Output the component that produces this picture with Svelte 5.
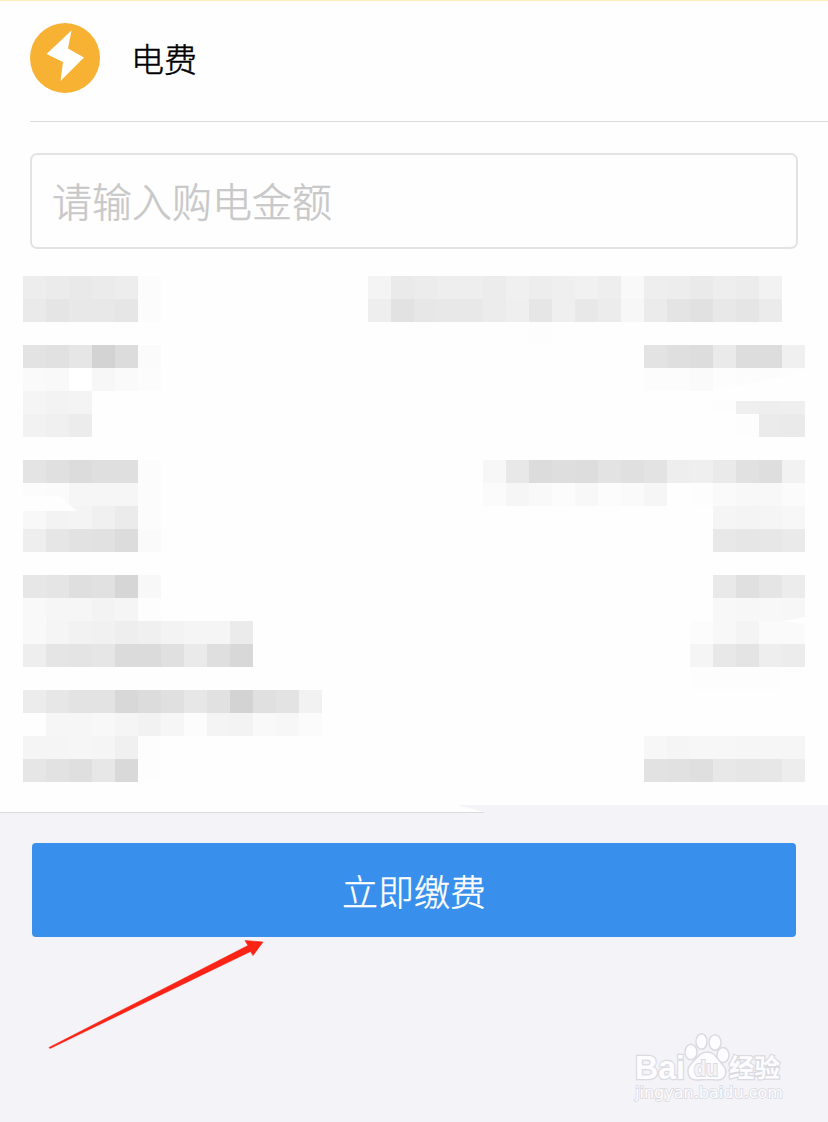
<script>
    let amount = "";

    // One entry per 23px row, two hex digits of grey per block
    const rows = [
        { left: "edebe9ebedfc", right: "f4eaeceeeeecf0edeff1eef9eeedeaeeecf2fe" },
        { left: "eae5e8e8e6fc", right: "eee2e7e8e8ecefe6efe8ecf7ebe4e1e8e5ebfe" },
        { left: "fefefefefefe", right: "fdfefefefefefefefefefefe" },
        { left: "e3e1e6d3dcfb", right: "fee3dfddeaddddf0" },
        { left: "faf9fff7fafc", right: "fcfcfafdfcfcfd" },
        { left: "f5f3f4", right: "fdefeeef" },
        { left: "f2f0ec", right: "fefdebea" },
        { left: "", right: "" },
        { left: "e4e0dcdfdffc", right: "f7e8dcdedde3e0e3eeefeae1def2" },
        { left: "fcfbf6f6f6fc", right: "fbf6f9fcf8fcfaf6fefdfaf8f8fb" },
        { left: "f8f3f4f0ebfc", right: "fef5f4f5f7" },
        { left: "eee6e2e1dcfa", right: "fee8e6e7ea" },
        { left: "", right: "" },
        { left: "e7e5dfe1d6f8", right: "fee9e0e5ec" },
        { left: "f9f6f6f3f5fd", right: "fef8f7f8f7" },
        { left: "f9f5f2f1eef0f3f5f5ebfe", right: "fcf8f4fafa" },
        { left: "eee5e4e6dbdbe0eadfd8fe", right: "f5e8e4eeec" },
        { left: "", right: "fdfdfdfdfe" },
        { left: "ece7e3e3d8dce0e7e1d3e0e3f2", right: "" },
        { left: "fef6f6f8f5f2f6fcf4f3f9f7fb", right: "" },
        { left: "f5f5f6f5f0fd", right: "fef7f5f7f7f6f6f6" },
        { left: "e6e2dfe7d9fd", right: "fee2e1dfe8e6e7ed" },
    ];

    function blocks(row) {
        return (row.match(/../g) || []).map((v) => "#" + v + v + v);
    }
</script>

<div class="page">
    <main class="panel">
        <header>
            <svg class="bolt" viewBox="0 0 70 70" aria-hidden="true">
                <circle cx="35" cy="35" r="35" fill="#f7b233" />
                <path d="M41.5 7.500 16.5 31 33 39 30.500 58 54 34.500 38 25.500Z" fill="#fff" />
            </svg>
            <h1>电费</h1>
        </header>

        <input type="text" placeholder="请输入购电金额" bind:value={amount} />

        <!-- Masked account details -->
        <div class="mosaic">
            {#each rows as row}
                <div class="row">
                    <div class="side">
                        {#each blocks(row.left) as color}
                            <i style="background-color: {color};"></i>
                        {/each}
                    </div>
                    <div class="side">
                        {#each blocks(row.right) as color}
                            <i style="background-color: {color};"></i>
                        {/each}
                    </div>
                </div>
            {/each}
            <svg class="erased" viewBox="0 0 782 506" aria-hidden="true">
                <g fill="#fefefe">
                    <path d="M0 220H34Q42 221 46 228L54 235H0Z" />
                    <path d="M690 115 782 96V125H690Z" />
                    <path d="M760 345 782 341V348Z" />
                </g>
            </svg>
        </div>
    </main>

    <footer>
        <svg class="edge" viewBox="0 0 368 9" aria-hidden="true">
            <path d="M0 0H368V8H364V9H25V8Q15 4 0 1Z" fill="#f4f4f8" />
        </svg>
        <button type="button">立即缴费</button>

        <svg class="arrow" viewBox="0 0 218 110" aria-hidden="true">
            <path d="M1 107.500 200 5.500 197 .500 215 2 205 15.500 202.500 11.500 2 108.500Z" fill="#fa2315" stroke="#fa2315" stroke-width=".6" />
        </svg>

        <svg class="watermark" viewBox="0 0 160 76" aria-label="Baidu">
            <g fill="#fdfdff" stroke="#dadae0" stroke-width="1.400">
                <ellipse cx="61" cy="21" rx="6" ry="7.800" />
                <ellipse cx="71.500" cy="10.500" rx="5.500" ry="7.800" />
                <ellipse cx="85" cy="11.500" rx="6" ry="7.800" />
                <ellipse cx="93" cy="24" rx="6" ry="7.500" />
                <path d="M77 21C70 21 66 28 61 33C56 38 57 49 66 49C72 49 82 48 87 49C97 49 98 39 92 33C87 28 85 21 77 21Z" />
            </g>
            <g class="letters">
                <text x="5" y="48" class="brand" textLength="50" lengthAdjust="spacingAndGlyphs">Bai</text>
                <text x="64" y="45" class="du" textLength="24" lengthAdjust="spacingAndGlyphs">du</text>
                <text x="99" y="46" class="cn" textLength="51" lengthAdjust="spacingAndGlyphs">经验</text>
                <text x="5" y="67" class="url" textLength="148" lengthAdjust="spacingAndGlyphs">jingyan.baidu.com</text>
            </g>
        </svg>
    </footer>
</div>

<style>
    :global(body) {
        background: #f3f3f8;
    }

    .page {
        display: flex;
        flex-direction: column;
        width: 828px;
        height: 1122px;
        overflow: hidden;
        font-family: "Noto Sans CJK SC", sans-serif;
        background: #f3f3f8;
    }

    .panel {
        box-sizing: border-box;
        height: 813px;
        background: #fefefe;
        border-top: 1px solid #fbf2ba;
        border-bottom: 1px solid #dadada;
    }

    header {
        display: flex;
        align-items: center;
        gap: 31px;
        box-sizing: border-box;
        height: 121px;
        margin-left: 30px;
        padding-bottom: 7px;
        border-bottom: 1px solid #dcdcdc;
    }

    .bolt {
        width: 70px;
        height: 70px;
    }

    h1 {
        margin: 0;
        font-size: 33px;
        font-weight: 300;
        line-height: 48px;
        color: #000;
        -webkit-text-stroke: 0.5px #000;
    }

    input {
        display: block;
        box-sizing: border-box;
        width: 768px;
        height: 96px;
        margin: 31px 30px 27px;
        padding: 0 20px 3px;
        border: 2px solid #e3e3e3;
        border-radius: 7px;
        background: #fefefe;
        font-family: inherit;
        font-size: 40px;
        font-weight: 300;
        outline: none;
    }

    input::placeholder {
        color: #c8c8c8;
        opacity: 1;
        -webkit-text-stroke: 0.5px #c8c8c8;
    }

    .mosaic {
        position: relative;
        margin: 0 23px;
    }

    .row {
        display: flex;
        justify-content: space-between;
        height: 23px;
    }

    .side {
        display: flex;
    }

    .side i {
        width: 23px;
        height: 23px;
    }

    .erased {
        position: absolute;
        top: 0;
        left: 0;
        width: 782px;
        height: 506px;
    }

    footer {
        position: relative;
        flex: 1;
        padding: 30px 32px 0;
    }

    .edge {
        position: absolute;
        top: -8px;
        left: 460px;
        width: 368px;
        height: 9px;
    }

    button {
        display: block;
        width: 764px;
        height: 94px;
        padding: 0 0 1px;
        border: none;
        border-radius: 4px;
        background: #388fec;
        color: #fff;
        font-family: inherit;
        font-size: 36px;
        font-weight: 300;
        -webkit-text-stroke: 0.4px #fff;
    }

    .arrow {
        position: absolute;
        top: 127px;
        left: 48px;
        width: 218px;
        height: 110px;
    }

    .watermark {
        position: absolute;
        top: 218px;
        left: 630px;
        width: 160px;
        height: 76px;
    }

    .letters text {
        fill: #fdfdff;
        stroke: #dadae0;
        stroke-width: 2.4px;
        paint-order: stroke;
    }

    .brand {
        font: bold 33px "Liberation Sans", sans-serif;
    }

    .letters .du {
        font: bold 22px "Liberation Sans", sans-serif;
        fill: #f3f3f8;
        stroke-width: 2px;
    }

    .cn {
        font: bold 25px "Noto Sans CJK SC", sans-serif;
    }

    .letters .url {
        font: 16px "DejaVu Sans", sans-serif;
        stroke-width: 1.6px;
    }
</style>
